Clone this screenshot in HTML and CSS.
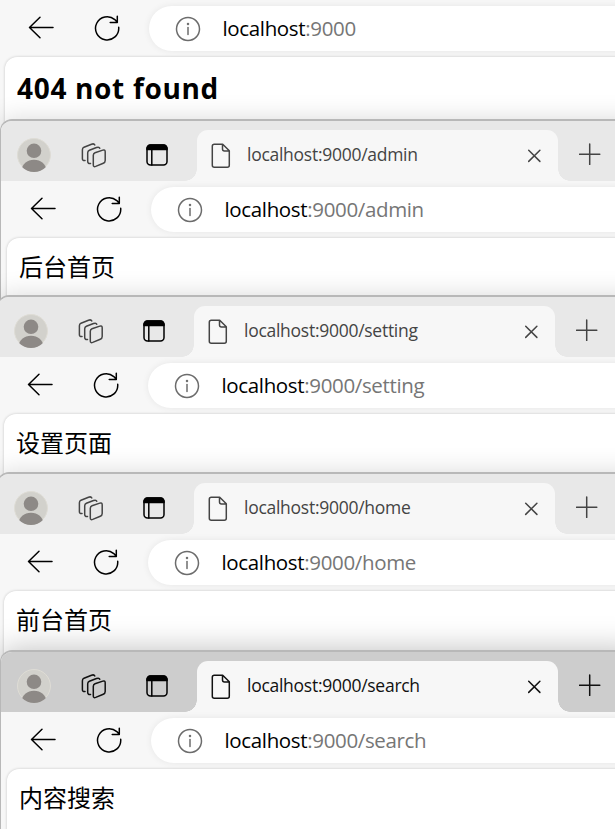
FILE: index.html
```html
<!DOCTYPE html>
<html lang="zh">
<head>
<meta charset="utf-8">
<title>localhost:9000</title>
<link rel="stylesheet" href="styles.css">
</head>
<body>
<svg class="defs" aria-hidden="true">
  <symbol id="back" viewBox="0 0 26 24"><path d="M25 11.5H1.5M12 1.3 1.5 11.5 12 21.7" /></symbol>
  <symbol id="reload" viewBox="0 0 26 26"><path d="M24.7 12.3A11.6 11.6 0 1 1 20.8 4.6L23.3 7.2M23.3 1.3V7.5H16.2" /></symbol>
  <symbol id="info" viewBox="0 0 26 26"><circle cx="13" cy="13" r="11.5"/><path d="M13 11.5V18.5"/><circle cx="13" cy="8" r=".5"/></symbol>
  <symbol id="spaces" viewBox="0 0 26 26"><path d="M14 9.8 21.8 7.1Q24.2 6.4 24.2 8.8V17.6Q24.2 19.6 22.3 20.3L14.7 23.4Q12.3 24.3 12.3 21.9V12.2Q12.3 10.4 14 9.8ZM9.5 20.5Q6.7 21 6.7 18.3V9.7Q6.7 8 8.4 7.3L15.5 4.5Q18.2 3.6 18.8 5.2M4 17.5Q1.4 18 1.4 15.4V6.7Q1.4 5 3 4.2L10.5 1.2Q13.1.3 13.8 2"/></symbol>
  <symbol id="tabs" viewBox="0 0 22 22"><rect x="1" y="1" width="20" height="20" rx="3.5"/><path d="M5.8 6V21"/><path class="solid" d="M1 5.6V4.5A3.5 3.5 0 0 1 4.5 1H17.5A3.5 3.5 0 0 1 21 4.5V5.6Z"/></symbol>
  <symbol id="file" viewBox="0 0 20 26"><path d="M3.3 1.2H11.7L18.3 7.8V22.3Q18.3 24.3 16.3 24.3H3.3Q1.3 24.3 1.3 22.3V3.2Q1.3 1.2 3.3 1.2ZM11.5 1.5V6Q11.5 8 13.5 8H18"/></symbol>
  <symbol id="close" viewBox="0 0 14 14"><path d="M1.7 1.2 12.9 12.4M12.9 1.2 1.7 12.4"/></symbol>
  <symbol id="plus" viewBox="0 0 22 22"><path d="M.5 11.3H20.8M10.7 1V21.5"/></symbol>
  <symbol id="avatar" viewBox="0 0 34 34"><clipPath id="round"><circle cx="17" cy="17" r="17"/></clipPath><circle class="disc" cx="17" cy="17" r="16.5"/><g class="person" clip-path="url(#round)"><circle cx="17" cy="12.8" r="7.3"/><ellipse cx="17" cy="32.5" rx="12.3" ry="10.8"/></g></symbol>
</svg>

<section class="window first">
  <div class="toolbar">
    <svg class="back"><use href="#back"/></svg><svg class="reload"><use href="#reload"/></svg>
    <div class="address"><svg class="info"><use href="#info"/></svg><p class="url"><b>localhost</b>:9000</p></div>
  </div>
  <main class="page"><h1>404 not found</h1></main>
</section>

<section class="window admin">
  <header class="strip">
    <svg class="avatar"><use href="#avatar"/></svg><svg class="spaces"><use href="#spaces"/></svg><svg class="tabs"><use href="#tabs"/></svg>
    <div class="tab"><svg class="file"><use href="#file"/></svg><span class="title">localhost:9000/admin</span><svg class="close"><use href="#close"/></svg></div>
    <svg class="plus"><use href="#plus"/></svg>
  </header>
  <div class="toolbar">
    <svg class="back"><use href="#back"/></svg><svg class="reload"><use href="#reload"/></svg>
    <div class="address"><svg class="info"><use href="#info"/></svg><p class="url"><b>localhost</b>:9000/admin</p></div>
  </div>
  <main class="page"><p>后台首页</p></main>
</section>

<section class="window shifted setting">
  <header class="strip">
    <svg class="avatar"><use href="#avatar"/></svg><svg class="spaces"><use href="#spaces"/></svg><svg class="tabs"><use href="#tabs"/></svg>
    <div class="tab"><svg class="file"><use href="#file"/></svg><span class="title">localhost:9000/setting</span><svg class="close"><use href="#close"/></svg></div>
    <svg class="plus"><use href="#plus"/></svg>
  </header>
  <div class="toolbar">
    <svg class="back"><use href="#back"/></svg><svg class="reload"><use href="#reload"/></svg>
    <div class="address"><svg class="info"><use href="#info"/></svg><p class="url"><b>localhost</b>:9000/setting</p></div>
  </div>
  <main class="page"><p>设置页面</p></main>
</section>

<section class="window shifted home">
  <header class="strip">
    <svg class="avatar"><use href="#avatar"/></svg><svg class="spaces"><use href="#spaces"/></svg><svg class="tabs"><use href="#tabs"/></svg>
    <div class="tab"><svg class="file"><use href="#file"/></svg><span class="title">localhost:9000/home</span><svg class="close"><use href="#close"/></svg></div>
    <svg class="plus"><use href="#plus"/></svg>
  </header>
  <div class="toolbar">
    <svg class="back"><use href="#back"/></svg><svg class="reload"><use href="#reload"/></svg>
    <div class="address"><svg class="info"><use href="#info"/></svg><p class="url"><b>localhost</b>:9000/home</p></div>
  </div>
  <main class="page"><p>前台首页</p></main>
</section>

<section class="window active">
  <header class="strip">
    <svg class="avatar"><use href="#avatar"/></svg><svg class="spaces"><use href="#spaces"/></svg><svg class="tabs"><use href="#tabs"/></svg>
    <div class="tab"><svg class="file"><use href="#file"/></svg><span class="title">localhost:9000/search</span><svg class="close"><use href="#close"/></svg></div>
    <svg class="plus"><use href="#plus"/></svg>
  </header>
  <div class="toolbar">
    <svg class="back"><use href="#back"/></svg><svg class="reload"><use href="#reload"/></svg>
    <div class="address"><svg class="info"><use href="#info"/></svg><p class="url"><b>localhost</b>:9000/search</p></div>
  </div>
  <main class="page"><p>内容搜索</p></main>
</section>
</body>
</html>
```

FILE: styles.css
```css
* { box-sizing: border-box; }
html, body { height: 829px; overflow: hidden; }
body {
  margin: 0;
  background: #f7f7f7;
  font-family: "Open Sans", "Noto Sans CJK SC", sans-serif;
  color: #000;
}
p, h1 { margin: 0; white-space: nowrap; }
svg { display: block; flex: none; fill: none; stroke: currentColor; stroke-width: 1.5; stroke-linecap: round; stroke-linejoin: round; }
.defs { width: 0; height: 0; position: absolute; }
.solid { fill: currentColor; }
.disc { fill: #d2d1cc; stroke: #dedcd5; stroke-width: 1; }
.person { fill: #8d8986; stroke: none; }

.window {
  --strip: #e8e8e8;
  --ink: #444;
  position: relative;
  display: flex;
  flex-direction: column;
  width: 640px;
  margin-top: -12px;
  overflow: hidden;
  background: #f7f7f7;
  border-top: 2px solid #b8b8b8;
  border-left: 1px solid #b8b8b8;
  border-radius: 12px 0 0 0;
  box-shadow: 0 0 26px rgba(0, 0, 0, .15);
}
.first { height: 131px; margin: 0 0 0 -2px; border-top: 0; border-radius: 0; }
.admin { height: 188px; }
.setting { height: 189px; }
.home { height: 190px; }
.shifted { margin-left: -3px; }
.active { --strip: #cdcdcd; --ink: #111; height: 191px; box-shadow: 0 0 32px rgba(0, 0, 0, .26); }

.strip {
  display: flex;
  flex: none;
  height: 60px;
  background: var(--strip);
  color: var(--ink);
}
.avatar { width: 34px; height: 34px; margin: 17px 0 0 16px; }
.spaces { width: 26px; height: 26px; margin: 21.6px 0 0 30px; }
.tabs { width: 22px; height: 22px; margin: 23px 0 0 39px; color: #000; }
.tab {
  position: relative;
  display: flex;
  width: 361px;
  height: 51px;
  margin: 9px 0 0 29px;
  padding-left: 14px;
  background: #f7f7f7;
  border-radius: 11px 11px 0 0;
}
.tab::before, .tab::after {
  content: "";
  position: absolute;
  bottom: 0;
  width: 12px;
  height: 12px;
}
.tab::before { left: -12px; background: radial-gradient(circle at 0 0, transparent 11.5px, #f7f7f7 12px); }
.tab::after { right: -12px; background: radial-gradient(circle at 100% 0, transparent 11.5px, #f7f7f7 12px); }
.file { width: 20px; height: 26px; margin-top: 13px; }
.title { width: 280px; margin: 11px 0 0 16px; font-size: 17.5px; line-height: 26px; letter-spacing: -.27px; white-space: nowrap; }
.close { width: 14px; height: 14px; margin: 19px 0 0 0; }
.plus { width: 22px; height: 22px; margin: 22px 0 0 21px; }

.toolbar { display: flex; flex: none; height: 57px; }
.back { width: 26px; height: 24px; margin: 16px 0 0 29px; }
.reload { width: 26px; height: 26px; margin: 15px 0 0 40px; }
.address {
  display: flex;
  flex: 1;
  height: 45px;
  margin: 6px 0 0 29px;
  padding-left: 26px;
  background: #fff;
  border-radius: 23px 0 0 23px;
  box-shadow: 0 0 7px rgba(0, 0, 0, .07);
}
.info { width: 26px; height: 26px; margin-top: 10px; color: #6c6c6c; }
.url { margin: 7px 0 0 21.5px; font-size: 20.5px; line-height: 30px; letter-spacing: -.35px; color: #767676; }
.url b { font-weight: 400; color: #000; }

.page {
  flex: 1;
  margin-left: 6px;
  padding: 10px 0 0 12px;
  background: #fff;
  border-radius: 12px 0 0 0;
  box-shadow: 0 0 3px rgba(0, 0, 0, .2);
}
.page p { font: 24px/36px "Noto Sans CJK SC", sans-serif; }
.page h1 { padding-top: 1px; font-size: 28px; line-height: 40px; letter-spacing: .68px; }
```
